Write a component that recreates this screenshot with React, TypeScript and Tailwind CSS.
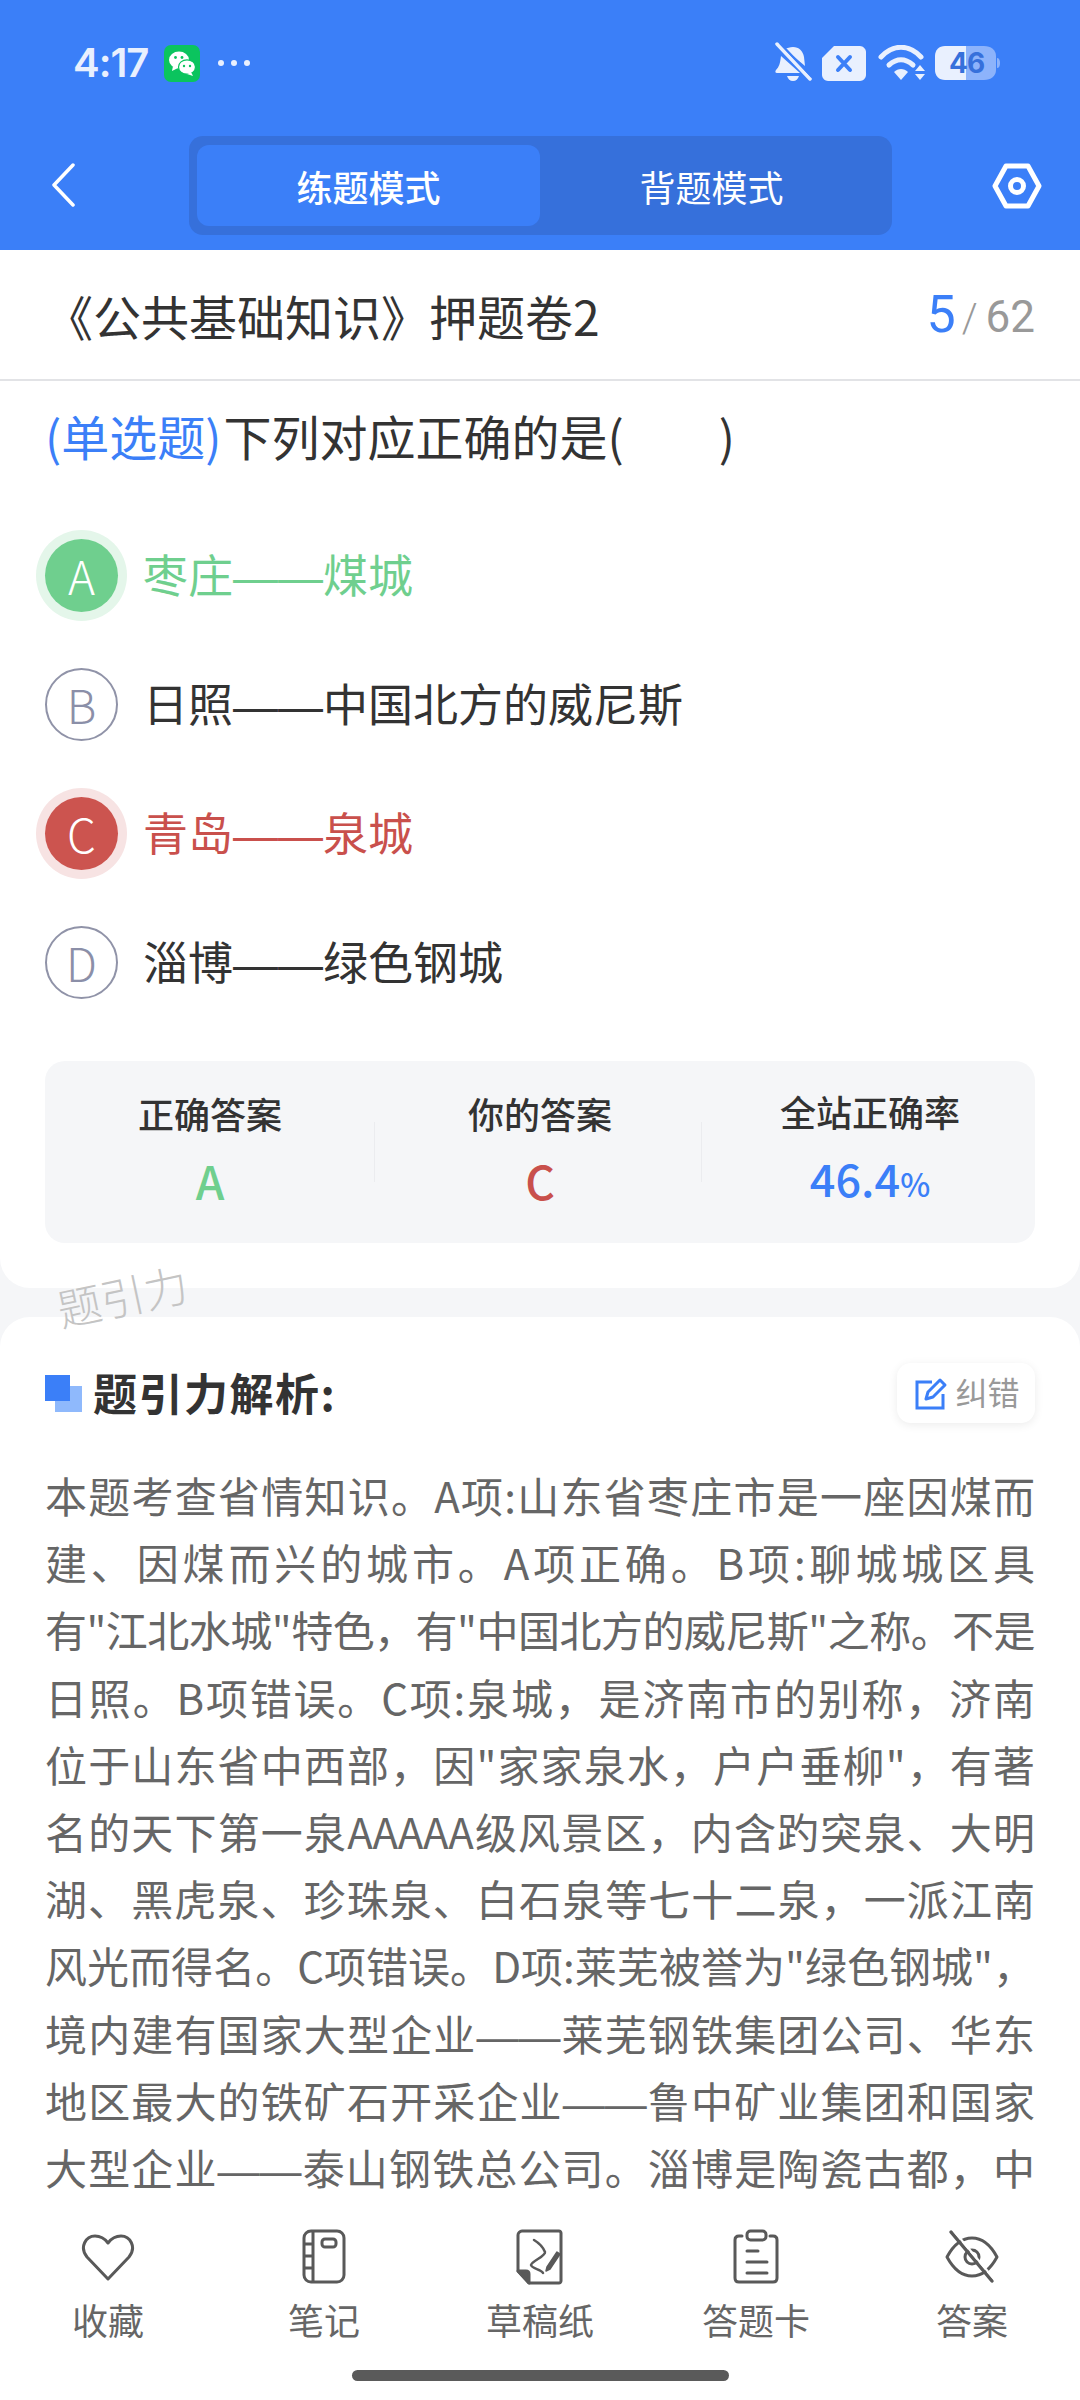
import { Fragment } from 'react'

const OPTIONS = [
  { key: 'A', text: '枣庄——煤城', state: 'right' },
  { key: 'B', text: '日照——中国北方的威尼斯', state: 'none' },
  { key: 'C', text: '青岛——泉城', state: 'wrong' },
  { key: 'D', text: '淄博——绿色钢城', state: 'none' },
]

const ANALYSIS_LINES = [
  '本题考查省情知识。A项:山东省枣庄市是一座因煤而',
  '建、因煤而兴的城市。A项正确。B项:聊城城区具',
  '有"江北水城"特色，有"中国北方的威尼斯"之称。不是',
  '日照。B项错误。C项:泉城，是济南市的别称，济南',
  '位于山东省中西部，因"家家泉水，户户垂柳"，有著',
  '名的天下第一泉AAAAA级风景区，内含趵突泉、大明',
  '湖、黑虎泉、珍珠泉、白石泉等七十二泉，一派江南',
  '风光而得名。C项错误。D项:莱芜被誉为"绿色钢城"，',
  '境内建有国家大型企业——莱芜钢铁集团公司、华东',
  '地区最大的铁矿石开采企业——鲁中矿业集团和国家',
  '大型企业——泰山钢铁总公司。淄博是陶瓷古都，中',
]

// the CJK font's em dash is short, Liberation's is a full 1em and joins up
function withDashes(text: string) {
  const parts = text.split('——')
  return parts.map((part, i) => (
    <Fragment key={i}>
      {part}
      {i < parts.length - 1 && <span className="leading-none font-['Liberation_Sans',sans-serif]">——</span>}
    </Fragment>
  ))
}

function OptionBadge({ label, state }: { label: string; state: string }) {
  if (state === 'right') {
    return (
      <span className="w-[73px] h-[73px] rounded-full bg-[#6fcf8e] ring-[9px] ring-[#e4f6ea] flex items-center justify-center text-white text-[46px] font-light">
        {label}
      </span>
    )
  }
  if (state === 'wrong') {
    return (
      <span className="w-[73px] h-[73px] rounded-full bg-[#cc544f] ring-[9px] ring-[#f7e3e3] flex items-center justify-center text-white text-[46px] font-light">
        {label}
      </span>
    )
  }
  return (
    <span className="w-[73px] h-[73px] rounded-full border-2 border-[#9093a8] flex items-center justify-center text-[#8b8fa8] text-[46px] font-light">
      {label}
    </span>
  )
}

function StatusBar() {
  return (
    <div className="h-[136px] relative">
      <div className="flex items-center pl-[73px] pt-[42px] h-[84px]">
        <span className="text-[40px] font-['Inter',sans-serif] font-semibold text-[#e9f0fe] tracking-[-1px] w-[91px]">4:17</span>
        <svg width="36" height="37" viewBox="0 0 36 37">
          <rect width="36" height="37" rx="7" fill="#0bc45e" />
          <ellipse cx="15" cy="15" rx="10" ry="8.5" fill="#fff" />
          <path d="M9 21l-1 5 6-3z" fill="#fff" />
          <ellipse cx="23" cy="22" rx="8.5" ry="7.2" fill="#fff" stroke="#0bc45e" strokeWidth="1.2" />
          <path d="M27 27l2 4-6-2z" fill="#fff" />
          <circle cx="11.5" cy="12.5" r="1.4" fill="#0bc45e" />
          <circle cx="18" cy="12.5" r="1.4" fill="#0bc45e" />
          <circle cx="20" cy="21" r="1.2" fill="#0bc45e" />
          <circle cx="26" cy="21" r="1.2" fill="#0bc45e" />
        </svg>
        <div className="flex gap-[7px] ml-[18px]">
          <span className="w-[6px] h-[6px] rounded-full bg-[#e9f0fe]" />
          <span className="w-[6px] h-[6px] rounded-full bg-[#e9f0fe]" />
          <span className="w-[6px] h-[6px] rounded-full bg-[#e9f0fe]" />
        </div>
        <div className="ml-auto flex items-center pr-[80px]">
          <svg width="38" height="42" viewBox="0 0 38 42" fill="#e9f0fe">
            <path d="M19 5c6 0 10 4 11 10l1 9 -20-17c2-1 5-2 8-2zM7 14l19 17H3c-2 0-2-2-1-3 3-3 4-6 5-14zM13 34h12c-1 3-3 5-6 5s-5-2-6-5z" />
            <path d="M3 2l33 35" stroke="#e9f0fe" strokeWidth="3.5" strokeLinecap="round" />
            <path d="M6 1l32 34" stroke="#3b7ff8" strokeWidth="2" />
          </svg>
          <svg width="44" height="35" viewBox="0 0 44 35" className="ml-[10px]">
            <path d="M12 0h26c3 0 6 3 6 6v23c0 3-3 6-6 6H6c-3 0-6-3-6-6V12z" fill="#e9f0fe" />
            <path d="M16 11l12 13M28 11L16 24" stroke="#3b7ff8" strokeWidth="4" strokeLinecap="round" />
          </svg>
          <svg width="48" height="36" viewBox="0 0 48 36" className="ml-[12px]">
            <path d="M3 12c12-13 28-13 40 0" stroke="#e9f0fe" strokeWidth="5" fill="none" strokeLinecap="round" />
            <path d="M11 20c8-7 16-7 24 0" stroke="#e9f0fe" strokeWidth="5" fill="none" strokeLinecap="round" />
            <path d="M16 27c4-4 10-4 14 0l-7 8z" fill="#e9f0fe" />
            <path d="M37 26l5-6 5 6zM37 29l5 6 5-6z" fill="#e9f0fe" />
          </svg>
          <div className="relative w-[65px] h-[34px] ml-[9px]">
            <svg width="65" height="34" viewBox="0 0 65 34">
              <path d="M10 0h21v34H10C4 34 0 30 0 24V10C0 4 4 0 10 0z" fill="#e9f0fe" />
              <path d="M31 0h18c7 0 12 4 12 10v14c0 6-5 10-12 10H31z" fill="#8db3fb" />
              <path d="M62 12c2 0 3 2 3 5s-1 5-3 5z" fill="#8db3fb" />
            </svg>
            <span className="absolute left-[14px] top-0 h-[34px] flex items-center text-[28px] font-['Inter',sans-serif] font-bold text-[#3670db] tracking-[-1px]">
              46
            </span>
          </div>
        </div>
      </div>
    </div>
  )
}

function NavRow() {
  return (
    <div className="h-[114px] flex items-start">
      <div className="w-[189px] pl-[50px] pt-[27px]">
        <svg width="26" height="44" viewBox="0 0 26 44" fill="none" stroke="#fff" strokeWidth="3.5" strokeLinecap="round" strokeLinejoin="round">
          <path d="M23 2L4 22l19 20" />
        </svg>
      </div>
      <div className="w-[703px] h-[99px] rounded-[14px] bg-[#3670db] pl-[8px] pt-[9px] flex">
        <div className="w-[343px] h-[81px] rounded-[12px] bg-[#3b7ff8] flex items-center justify-center text-white text-[36px] font-medium">
          练题模式
        </div>
        <div className="w-[343px] h-[81px] flex items-center justify-center text-white text-[36px]">
          背题模式
        </div>
      </div>
      <div className="ml-auto pr-[38px] pt-[27px]">
        <svg width="50" height="46" viewBox="0 0 50 46" fill="none" stroke="#fff" strokeWidth="5" strokeLinejoin="round">
          <path d="M14 3h22l11 20-11 20H14L3 23z" />
          <circle cx="25" cy="23" r="6.5" />
        </svg>
      </div>
    </div>
  )
}

function QuestionCard() {
  return (
    <div className="bg-white rounded-b-[30px] pb-[45px]">
      <div className="h-[131px] px-[45px] border-b-2 border-[#e2e3e6] flex items-center justify-between">
        <h1 className="text-[48px] text-[#333] font-normal whitespace-nowrap">《公共基础知识》押题卷2</h1>
        <div className="flex items-baseline text-[#999]">
          <span className="text-[52px] text-[#3b7ff8] font-['Roboto',sans-serif] font-normal">5</span>
          <span className="text-[40px] font-['Roboto',sans-serif] font-light ml-[6px] mr-[8px]">/</span>
          <span className="text-[44px] font-['Roboto',sans-serif] font-normal">62</span>
        </div>
      </div>

      <p className="pt-[24px] pl-[45px] text-[48px] leading-[60px] text-[#333] whitespace-pre">
        <span className="text-[#3b7ff8] mr-[2px]">(单选题)</span>下列对应正确的是(        <span className="ml-[9px]">)</span>
      </p>

      <div className="mt-[46px]">
        {OPTIONS.map((opt) => (
          <div key={opt.key} className="h-[129px] pl-[45px] flex items-center gap-[25px]">
            <OptionBadge label={opt.key} state={opt.state} />
            <span
              className={
                opt.state === 'right'
                  ? 'pb-[3px] text-[45px] text-[#6fcf8e]'
                  : opt.state === 'wrong'
                    ? 'pb-[3px] text-[45px] text-[#c9504c]'
                    : 'pb-[3px] text-[45px] text-[#333]'
              }
            >
              {withDashes(opt.text)}
            </span>
          </div>
        ))}
      </div>

      <div className="mt-[34px] mx-[45px] h-[182px] rounded-[20px] bg-[#f5f6f8] pb-[8px] grid grid-cols-3 items-center">
        <div className="flex flex-col items-center gap-[14px]">
          <span className="text-[36px] leading-[50px] font-medium text-[#333]">正确答案</span>
          <span className="text-[46px] leading-[56px] font-medium text-[#6fcf8e]">A</span>
        </div>
        <div className="flex flex-col items-center gap-[14px] relative">
          <span className="absolute -left-px top-[34px] h-[60px] w-px bg-[#ebecef]" />
          <span className="text-[36px] leading-[50px] font-medium text-[#333]">你的答案</span>
          <span className="text-[46px] leading-[56px] font-medium text-[#c9504c]">C</span>
          <span className="absolute right-[3px] top-[34px] h-[60px] w-px bg-[#ebecef]" />
        </div>
        <div className="flex flex-col items-center gap-[14px]">
          <span className="text-[36px] leading-[50px] font-medium text-[#333]">全站正确率</span>
          <span className="text-[45px] leading-[56px] font-medium text-[#3b7ff8]">
            46.4<span className="text-[32px]">%</span>
          </span>
        </div>
      </div>
    </div>
  )
}

function AnalysisCard() {
  return (
    <div className="mt-[29px] flex-1 min-h-0 overflow-hidden bg-white rounded-t-[30px] pt-[46px] px-[45px]">
      <div className="h-[60px] flex items-center justify-between">
        <div className="flex items-center">
          <svg width="37" height="37" viewBox="0 0 37 37">
            <rect x="10" y="11" width="27" height="26" fill="#8fb9fc" />
            <rect width="25" height="26" fill="#3b7ff8" />
          </svg>
          <span className="ml-[11px] pb-[2px] text-[44px] font-bold text-[#333] tracking-[1.5px]">题引力解析:</span>
        </div>
        <div className="w-[138px] h-[60px] rounded-[14px] bg-white shadow-[0_2px_10px_rgba(0,0,0,0.08)] pl-[3px] flex items-center justify-center gap-[7px]">
          <svg width="33" height="33" viewBox="0 0 33 33" fill="none" stroke="#3b7ff8" strokeWidth="3">
            <path d="M17 5H2v26h26V17" />
            <path d="M11 22l2-7L25 3l5 5-12 12z" strokeLinejoin="round" />
          </svg>
          <span className="pb-[5px] text-[32px] text-[#999]">纠错</span>
        </div>
      </div>

      <div className="mt-[38px] text-[42px] leading-[67.2px] text-[#666]">
        {ANALYSIS_LINES.map((line) => (
          <div
            key={line}
            className={
              line.startsWith('有"')
                ? 'whitespace-nowrap tracking-[-0.6px] text-justify [text-align-last:justify]'
                : 'whitespace-nowrap text-justify [text-align-last:justify]'
            }
          >
            {withDashes(line)}
          </div>
        ))}
      </div>
    </div>
  )
}

const TOOLS = [
  {
    label: '收藏',
    icon: (
      <svg width="56" height="56" viewBox="0 0 56 56" fill="none" stroke="#595959" strokeWidth="3" strokeLinejoin="round">
        <path d="M28 50L7 28C-1 18 6 7 15 7c6 0 10 3 13 7 3-4 7-7 13-7 9 0 16 11 8 21z" />
      </svg>
    ),
  },
  {
    label: '笔记',
    icon: (
      <svg width="56" height="56" viewBox="0 0 56 56" fill="none" stroke="#595959" strokeWidth="3" strokeLinejoin="round">
        <rect x="8" y="2" width="40" height="51" rx="7" />
        <path d="M17 2v51M8 15h9M8 27h9M8 39h9" />
        <rect x="26" y="10" width="14" height="8" rx="3" />
      </svg>
    ),
  },
  {
    label: '草稿纸',
    icon: (
      <svg width="56" height="56" viewBox="0 0 56 56" fill="none" stroke="#595959" strokeWidth="3" strokeLinejoin="round" strokeLinecap="round">
        <path d="M10 2h37c1 0 2 1 2 2v48c0 1-1 2-2 2H17L6 42V6c0-2 2-4 4-4z" />
        <path d="M6 42h8c2 0 3 1 3 3v9z" fill="#595959" />
        <path d="M22 11c5 3 9 7 11 12 1 4-13 9-14 13 1 4 10 4 12 8" strokeWidth="2.5" />
        <path d="M35 38l10-15 3 2-10 15-4 2z" fill="#595959" strokeWidth="1.5" />
      </svg>
    ),
  },
  {
    label: '答题卡',
    icon: (
      <svg width="56" height="56" viewBox="0 0 56 56" fill="none" stroke="#595959" strokeWidth="3" strokeLinecap="round">
        <path d="M14 7h-3c-3 0-4 2-4 4v38c0 3 2 4 4 4h34c3 0 4-2 4-4V11c0-2-1-4-4-4h-3" />
        <rect x="19" y="2" width="19" height="9" rx="3.5" />
        <path d="M19 22h11M19 33h20M19 44h20" />
      </svg>
    ),
  },
  {
    label: '答案',
    icon: (
      <svg width="56" height="56" viewBox="0 0 56 56" fill="none" stroke="#595959" strokeWidth="3" strokeLinecap="round" strokeLinejoin="round">
        <path d="M3 28C10 15 18 9 28 9s18 6 25 19c-7 13-15 19-25 19S10 41 3 28z" />
        <path d="M21 28a7 7 0 0 0 14 0 7 7 0 0 0-14 0z" />
        <path d="M7 3l41 49" strokeWidth="3.5" />
        <path d="M10 2l41 49" stroke="#fff" strokeWidth="2" />
      </svg>
    ),
  },
]

function BottomBar() {
  return (
    <div className="h-[198px] bg-white shrink-0 flex flex-col">
      <div className="grid grid-cols-5 pt-[27px]">
        {TOOLS.map((tool) => (
          <div key={tool.label} className="flex flex-col items-center">
            {tool.icon}
            <span className="mt-[10px] text-[36px] leading-[48px] text-[#666]">{tool.label}</span>
          </div>
        ))}
      </div>
      <div className="mt-[27px] mx-auto w-[377px] h-[11px] rounded-full bg-[#5a5a5a]" />
    </div>
  )
}

export default function App() {
  return (
    <div className="relative w-[1080px] h-[2400px] overflow-hidden flex flex-col bg-[#f5f6f8] font-['Noto_Sans_CJK_SC',sans-serif]">
      <div className="bg-[#3b7ff8] shrink-0">
        <StatusBar />
        <NavRow />
      </div>
      <QuestionCard />
      <AnalysisCard />
      <BottomBar />
      {/* watermark */}
      <div className="absolute left-[56px] top-[1270px] -rotate-[12deg] text-[44px] leading-[50px] text-[#c4c4c4] font-light">
        题引力
      </div>
    </div>
  )
}
